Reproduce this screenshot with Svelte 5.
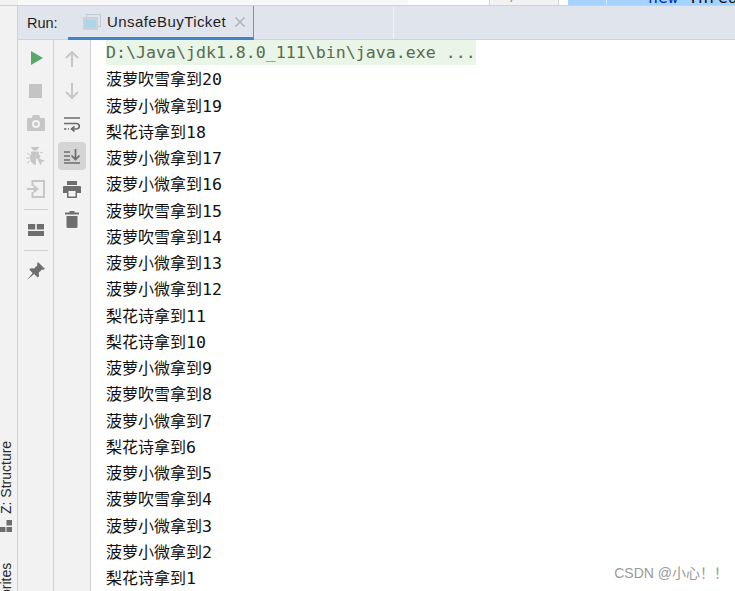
<script>
  const rows = [
    ['菠萝吹雪拿到', '20'], ['菠萝小微拿到', '19'], ['梨花诗拿到', '18'], ['菠萝小微拿到', '17'],
    ['菠萝小微拿到', '16'], ['菠萝吹雪拿到', '15'], ['菠萝吹雪拿到', '14'], ['菠萝小微拿到', '13'],
    ['菠萝小微拿到', '12'], ['梨花诗拿到', '11'], ['梨花诗拿到', '10'], ['菠萝小微拿到', '9'],
    ['菠萝吹雪拿到', '8'], ['菠萝小微拿到', '7'], ['梨花诗拿到', '6'], ['菠萝小微拿到', '5'],
    ['菠萝吹雪拿到', '4'], ['菠萝小微拿到', '3'], ['菠萝小微拿到', '2'], ['梨花诗拿到', '1']
  ];
</script>

<div class="page">
  <div class="topstrip">
    <div class="ts a"></div>
    <div class="ts b"></div>
    <div class="ts c"><span>7</span></div>
    <div class="ts d"><i></i><span><b>new</b> Threa</span></div>
  </div>
  <div class="main">
    <aside class="rail">
      <div class="vtext top-v">
        <svg class="structure" width="12" height="12" viewBox="0 0 12 12"><path d="M0 7h5.500v5H0zM6.500 7H12v5H6.500zM6.500 0H12v5.500H6.500z" fill="#6e6e6e"/></svg>
        <span>Z: Structure</span>
      </div>
      <div class="vtext fav"><span>orites</span></div>
    </aside>
    <div class="panel">
      <header class="tabbar">
        <span class="runlabel">Run:</span>
        <div class="tab">
          <svg width="18" height="16" viewBox="0 0 18 16">
            <rect x="3.500" y="0.500" width="14" height="12" fill="none" stroke="#c3c9d3"/>
            <rect x="0" y="3" width="15" height="13" fill="#ccd1da"/>
            <rect x="2" y="6" width="11" height="8" fill="#a9d7ea"/>
          </svg>
          <span class="tabname">UnsafeBuyTicket</span>
          <svg class="close" width="10" height="10" viewBox="0 0 10 10"><path d="M.5.5l9 9M9.500.5l-9 9" stroke="#a8adb5" stroke-width="1.200"/></svg>
        </div>
        <div class="sep"></div>
      </header>
      <div class="body">
        <div class="tools one">
          <div class="slot play"><svg width="12" height="14" viewBox="0 0 12 14"><path d="M0 0l12 7-12 7z" fill="#59a869"/></svg></div>
          <div class="slot"><svg width="13" height="14" viewBox="0 0 13 14"><rect width="13" height="14" fill="#c4c4c4"/></svg></div>
          <div class="slot"><svg width="18" height="16" viewBox="0 0 18 16"><path fill-rule="evenodd" d="M6 0h6l1.500 3H18v13H0V3h4.500zM9 5a4 4 0 100 8 4 4 0 000-8zM9 7a2 2 0 110 4 2 2 0 010-4z" fill="#c6c6c6"/></svg></div>
          <div class="slot"><svg width="19" height="18" viewBox="0 0 19 18"><path d="M5 0l2.500 3h3L13 0M1 6l3 2M0 11h4M1 16l3-2M14 6l3-1M5.500 5h7v2.500h-7zM4.500 8.500h4.800v9C6 17 4.500 13.500 4.500 8.500zM10.300 8.500h3.500v2l-3.500 1z" fill="#c6c6c6" stroke="#c6c6c6" stroke-width="1"/><path d="M11 10.500l8 3.500-3.300 1-1.200 3.500z" fill="#c6c6c6"/></svg></div>
          <div class="slot"><svg width="18" height="18" viewBox="0 0 18 18"><path d="M5.500 6V1H17v16H5.500v-5" fill="none" stroke="#c6c6c6" stroke-width="2"/><path d="M0 8h6.500V4.500L12 9l-5.500 4.500V10H0z" fill="#c6c6c6"/></svg></div>
          <div class="rule"></div>
          <div class="slot"><svg width="16" height="12" viewBox="0 0 16 12"><path d="M0 0h7.200v5.500H0zM8.800 0H16v5.500H8.800zM0 7h16v5H0z" fill="#6e6e6e"/></svg></div>
          <div class="rule"></div>
          <div class="slot"><svg width="18" height="18" viewBox="0 0 18 18"><path d="M11 0l7 7-1.800 .8-1.200-.4-3.300 3.300.4 3.300-1.500 1.500-3.400-3.400L0 18l5.700-6.900-3.400-3.400 1.500-1.500 3.300.4L10.400 3.300 10 2z" fill="#6e6e6e"/></svg></div>
        </div>
        <div class="tools two">
          <svg width="14" height="16" viewBox="0 0 14 16"><path d="M7 1v15M1 7l6-6 6 6" fill="none" stroke="#c6c6c6" stroke-width="2"/></svg>
          <svg class="g1" width="14" height="16" viewBox="0 0 14 16"><path d="M7 0v15M1 9l6 6 6-6" fill="none" stroke="#c6c6c6" stroke-width="2"/></svg>
          <svg class="g2" width="16" height="15" viewBox="0 0 16 15"><path d="M0 1h16M0 6.500h12.500a2.700 2.700 0 010 5.500H8M10.500 9.500L7.500 12l3 2.500M0 12h2.500M4 12h1" fill="none" stroke="#6e6e6e" stroke-width="1.700"/></svg>
          <div class="active"><svg width="16" height="15" viewBox="0 0 16 15"><path d="M0 3h6M0 7h6M0 11h6M0 14h16M11.500 0v10M7.500 6.500l4 4 4-4" fill="none" stroke="#6e6e6e" stroke-width="1.700"/></svg></div>
          <svg class="g3" width="18" height="17" viewBox="0 0 18 17"><path fill-rule="evenodd" d="M4 0h10v4H4zM1 5h16a1 1 0 011 1v6h-4v5H4v-5H0V6a1 1 0 011-1zM5.500 10v5.500h7V10z" fill="#6e6e6e"/></svg>
          <svg class="g4" width="14" height="17" viewBox="0 0 14 17"><path d="M4.500 0h5v1.500H14V3.500H0V1.500h4.500zM1.500 5h11v10.500a1.500 1.500 0 01-1.500 1.500H3a1.500 1.500 0 01-1.500-1.500z" fill="#6e6e6e"/></svg>
        </div>
        <main class="console">
          <div class="line cmd">D:\Java\jdk1.8.0_111\bin\java.exe ...</div>
          {#each rows as [name, n]}
            <div class="line"><span class="cjk">{name}</span><span class="num">{n}</span></div>
          {/each}
        </main>
      </div>
    </div>
  </div>
  <div class="mark">CSDN @小心！！</div>
</div>

<style>
  :global(body) { margin: 0; background: #fff; }
  .page { position: relative; width: 735px; height: 591px; overflow: hidden; font-family: "DejaVu Sans", sans-serif; }
  .topstrip { height: 5px; display: flex; background: #fff; overflow: hidden; border-bottom: 1px solid #d1d1d1; }
  .ts { height: 5px; flex: none; }
  .ts.a { width: 408px; background: #f8f8f8; border-left: 18px solid #f2f2f2; box-sizing: border-box; }
  .ts.b { width: 81px; background: #fff; }
  .ts.c { width: 70px; background: #f2f2f2; border-left: 1px solid #d4d4d4; border-right: 1px solid #d4d4d4; box-sizing: border-box; position: relative; overflow: hidden; }
  .ts.c span { position: absolute; left: 18px; top: -9px; font: 13px/13px "DejaVu Sans Mono", monospace; color: #999; }
  .ts.d { flex: 1; margin-left: 9px; background: #a6d2ff; position: relative; overflow: hidden; }
  .ts.d i { position: absolute; left: 38px; top: 0; width: 1px; height: 5px; background: #d8e8f8; }
  .ts.d span { position: absolute; left: 80px; top: -10px; font: 16.6px/16px "DejaVu Sans Mono", monospace; color: #111; white-space: pre; }
  .ts.d b { font-weight: normal; color: #0033b3; }
  .main { display: flex; height: 585px; }
  .rail { width: 17px; flex: none; background: #f2f2f2; border-right: 1px solid #d1d1d1; position: relative; }
  .vtext { position: absolute; left: -2px; width: 17px; writing-mode: vertical-rl; transform: rotate(180deg); font-size: 14px; color: #2b2b2b; font-family: "Liberation Sans", sans-serif; white-space: nowrap; line-height: 17px; }
  .top-v { top: 434px; height: 92px; display: flex; align-items: center; justify-content: flex-start; gap: 6px; }
  .structure { transform: rotate(180deg); flex: none; }
  .fav { top: 555px; height: 36px; }
  .panel { flex: 1; display: flex; flex-direction: column; min-width: 0; }
  .tabbar { height: 33px; flex: none; background: #e0e4ec; border-bottom: 1px solid #d1d1d1; display: flex; align-items: stretch; position: relative; }
  .runlabel { font: 14.5px/34px "Liberation Sans", sans-serif; color: #1f1f1f; margin-left: 9px; width: 41px; flex: none; }
  .tab { width: 186px; box-sizing: border-box; flex: none; display: flex; align-items: center; gap: 6px; padding-left: 15px; border-bottom: 3px solid #4083c9; height: 34px; margin-bottom: -1px; border-right: 1px solid #8c8c8c; }
  .tabname { font: 15px "Liberation Sans", sans-serif; color: #1f1f1f; letter-spacing: .42px; }
  .close { margin-left: 3px; }
  .sep { width: 1px; margin-left: 139px; background: #f2f2f2; }
  .body { flex: 1; display: flex; min-height: 0; }
  .tools { flex: none; background: #f2f2f2; border-right: 1px solid #d1d1d1; box-sizing: border-box; display: flex; flex-direction: column; align-items: center; }
  .tools.one { width: 36px; padding-top: 2px; }
  .tools.two { width: 37px; padding-top: 11px; }
  .slot { height: 32.6px; width: 100%; flex: none; display: flex; align-items: center; justify-content: center; }
  .slot.play { padding-left: 2px; box-sizing: border-box; }
  .rule { width: 24px; height: 1px; background: #d1d1d1; flex: none; margin: 4px 0 3.7px; }
  .g1 { margin-top: 16px; }
  .g2 { margin-top: 18px; }
  .active { width: 28px; height: 28px; border-radius: 4px; background: #d5d5d5; display: flex; align-items: center; justify-content: center; margin-top: 10px; }
  .g3 { margin-top: 11px; }
  .g4 { margin-top: 13px; }
  .console { flex: 1; padding: 0 0 0 15px; background: #fff; min-width: 0; }
  .line { height: 26.25px; line-height: 26.25px; font-family: "DejaVu Sans Mono", monospace; font-size: 16.6px; white-space: pre; color: #111; }
  .cmd { color: #5a6b4e; background: #e9f5e6; width: 370px; height: 25.25px; }
  .cjk { font-family: "Noto Sans CJK SC", sans-serif; font-size: 16px; color: #111; }
  .mark { position: absolute; right: 7px; top: 562px; font: 14px "Liberation Sans", "Noto Sans CJK SC", sans-serif; color: #9a9a9a; }
</style>
